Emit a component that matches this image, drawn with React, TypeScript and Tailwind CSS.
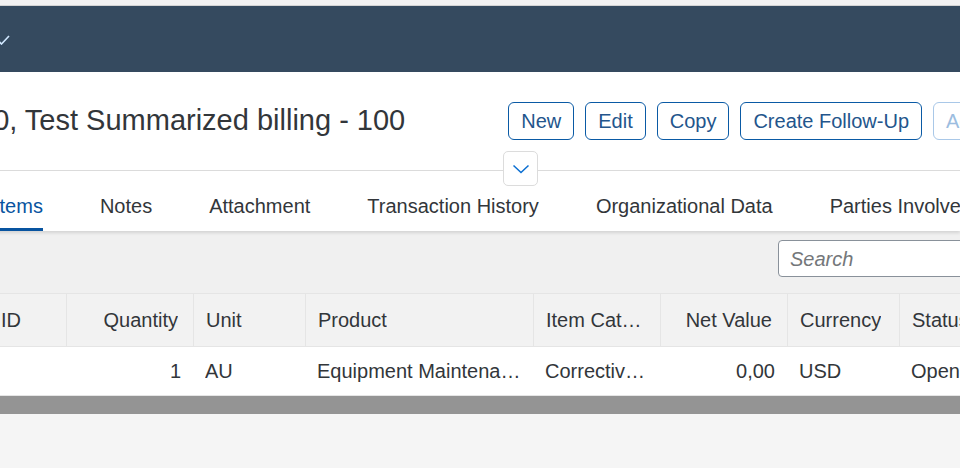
import { ReactNode } from "react";

const tabs = ["Items", "Notes", "Attachment", "Transaction History", "Organizational Data", "Parties Involved"];

const columns = [
  { label: "ID", width: "w-[66px]", align: "left" },
  { label: "Quantity", width: "w-[127px]", align: "right" },
  { label: "Unit", width: "w-[112px]", align: "left" },
  { label: "Product", width: "w-[228px]", align: "left" },
  { label: "Item Category", width: "w-[127px]", align: "left" },
  { label: "Net Value", width: "w-[127px]", align: "right" },
  { label: "Currency", width: "w-[112px]", align: "left" },
  { label: "Status", width: "w-[120px]", align: "left" },
];

const row = ["", "1", "AU", "Equipment Maintenance", "Corrective Maintenance", "0,00", "USD", "Open"];

function ActionButton({ children, disabled }: { children: ReactNode; disabled?: boolean }) {
  return (
    <button
      className={
        "h-[38px] px-[12px] rounded-[6px] border bg-white text-[20px] leading-none shrink-0 " +
        (disabled ? "border-[#a9c8e8] text-[#9cbde0]" : "border-[#0a5aa5] text-[#23558c]")
      }
    >
      {children}
    </button>
  );
}

export default function App() {
  return (
    <div className="w-[960px] h-[468px] overflow-hidden bg-[#f5f5f5] font-['Liberation_Sans',Arial,sans-serif] text-[#32363a]">
      {/* shell strip */}
      <div className="h-[5px] bg-[#f2f2f2]" />
      <div className="h-px bg-[#d4d4d4]" />
      <div className="h-[66px] bg-[#354a5f] flex items-center">
        <svg width="12" height="10" viewBox="0 0 12 10" className="-ml-[2px] mt-[2px]">
          <path d="M1 6.5 L3.5 9 L11 1" fill="none" stroke="#d1e8ff" strokeWidth="1.6" />
        </svg>
      </div>

      {/* object header */}
      <div className="relative bg-white border-b border-[#dcdcdc]">
        <div className="h-[98px] flex items-center">
          <h1 className="-ml-[23px] text-[29px] whitespace-nowrap shrink-0">10, Test Summarized billing - 100</h1>
          <div className="ml-[103px] flex gap-[11px] shrink-0">
            <ActionButton>New</ActionButton>
            <ActionButton>Edit</ActionButton>
            <ActionButton>Copy</ActionButton>
            <ActionButton>Create Follow-Up</ActionButton>
            <ActionButton disabled>Add</ActionButton>
          </div>
        </div>
        <button className="absolute z-20 left-[503px] top-[79px] w-[35px] h-[35px] rounded-[5px] border border-[#dcdcdc] bg-white flex items-center justify-center">
          <svg width="18" height="10" viewBox="0 0 18 10">
            <path d="M1.5 1.5 L9 8.5 L16.5 1.5" fill="none" stroke="#0a6ed1" strokeWidth="1.5" />
          </svg>
        </button>
      </div>

      {/* tab bar */}
      <div className="relative z-10 h-[60px] bg-white shadow-[0_2px_3px_rgba(0,0,0,0.12)] flex gap-[57px] -ml-[6px] whitespace-nowrap">
        {tabs.map((t, i) => (
          <div
            key={t}
            className={
              "h-full flex items-center text-[20px] pt-[12px] border-b-[3px] " +
              (i === 0 ? "border-[#0854a0] text-[#0854a0]" : "border-transparent text-[#32363a]")
            }
          >
            {t}
          </div>
        ))}
      </div>

      {/* items section */}
      <div className="bg-[#f0f0f0]">
        <div className="h-[62px] flex items-start justify-end pt-[9px]">
          <div className="w-[222px] h-[37px] -mr-[40px] bg-white border border-[#89919a] rounded-[4px] flex items-center px-[11px]">
            <span className="italic text-[20px] text-[#74777a]">Search</span>
          </div>
        </div>

        <div className="flex whitespace-nowrap border-y border-[#e5e5e5] bg-[#f2f2f2] h-[54px]">
          {columns.map((c, i) => (
            <div
              key={c.label}
              className={
                c.width +
                " shrink-0 flex items-center text-[20px] overflow-hidden " +
                (i > 0 ? "border-l border-[#e5e5e5] " : "") +
                (c.align === "right" ? "justify-end pr-[15px] pl-3" : "pl-3 pr-3") +
                (i === 0 ? " pl-[1px]" : "")
              }
            >
              <span className="truncate min-w-0">{c.label}</span>
            </div>
          ))}
        </div>

        <div className="flex whitespace-nowrap bg-white h-[49px] border-b border-[#e5e5e5]">
          {columns.map((c, i) => (
            <div
              key={c.label}
              className={
                c.width +
                " shrink-0 flex items-center text-[20px] overflow-hidden px-3 " +
                (c.align === "right" ? "justify-end" : "")
              }
            >
              <span className="truncate min-w-0">{row[i]}</span>
            </div>
          ))}
        </div>
      </div>

      {/* horizontal scrollbar */}
      <div className="h-[18px] bg-[#949494]" />
    </div>
  );
}
